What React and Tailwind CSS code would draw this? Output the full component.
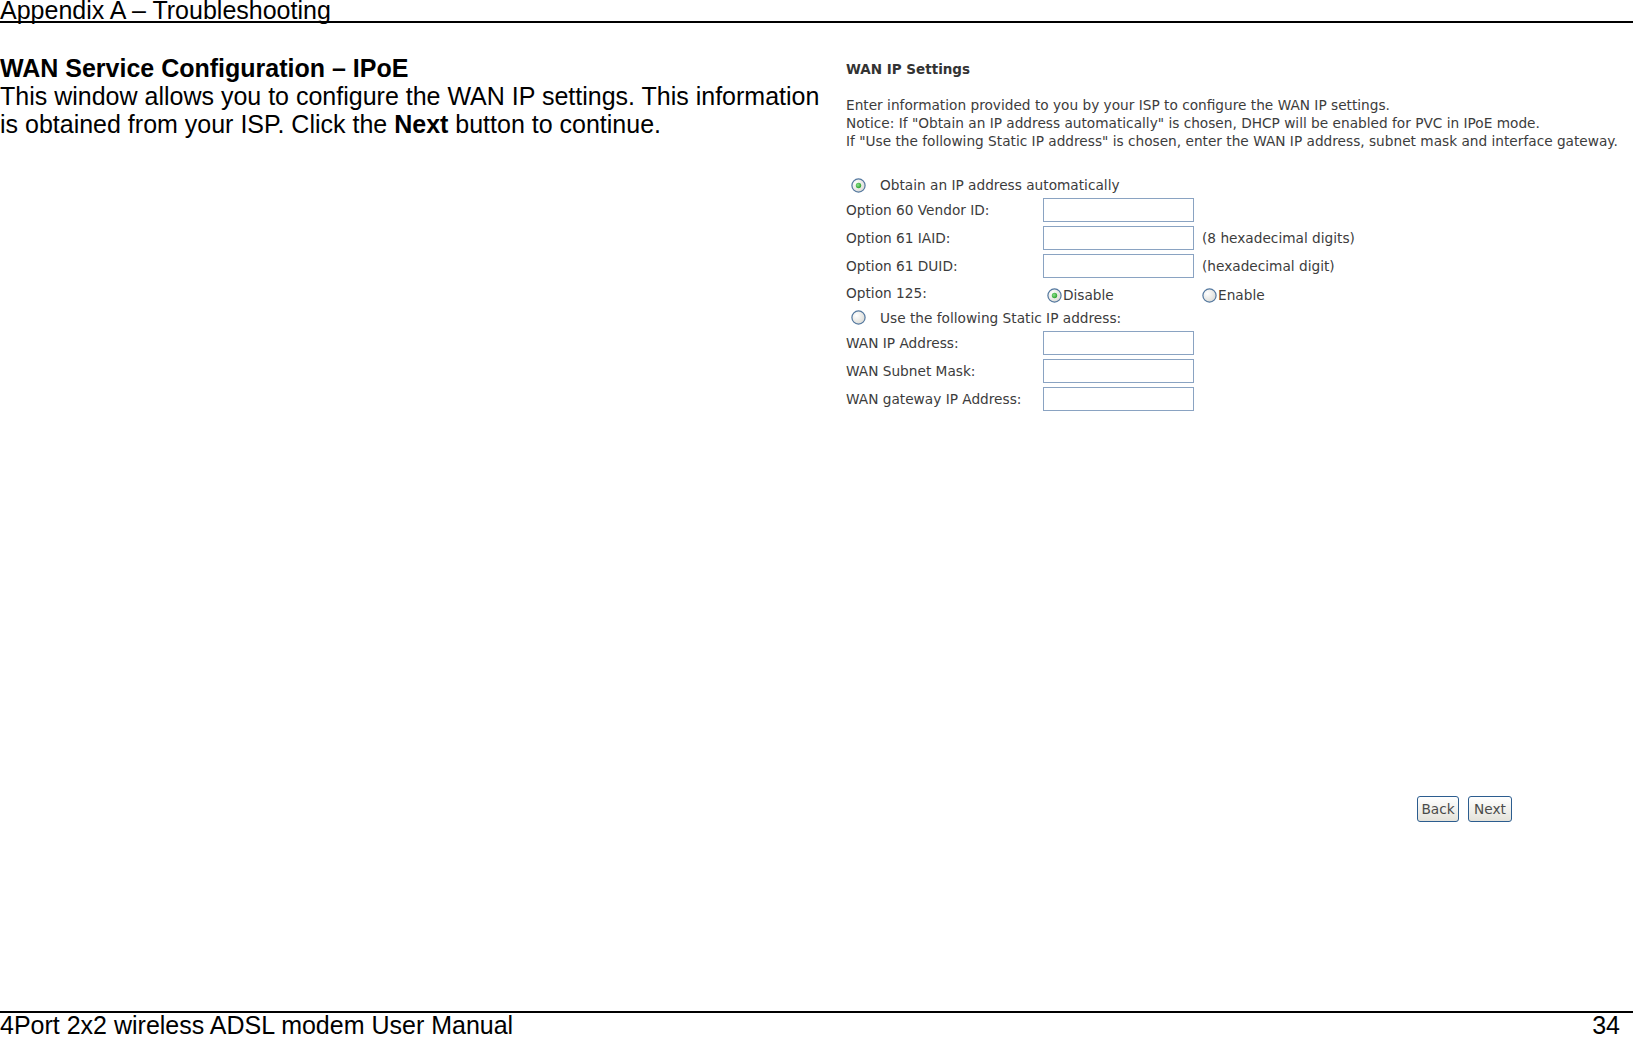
import React from "react";

const doc = "font-['Liberation_Sans',Arial,sans-serif] text-black";
const ui = "font-['DejaVu_Sans',Verdana,sans-serif] text-[13.7px] leading-[14px] text-[#3c3c3c]";

function Radio({ checked = false }) {
  return (
    <svg width="15" height="15" viewBox="0 0 15 15" className="shrink-0">
      <defs>
        <radialGradient id="radioFill" cx="0.35" cy="0.35" r="0.8">
          <stop offset="0%" stopColor="#ffffff" />
          <stop offset="100%" stopColor="#d6d6d0" />
        </radialGradient>
        <radialGradient id="radioDot" cx="0.4" cy="0.4" r="0.7">
          <stop offset="0%" stopColor="#8ee08e" />
          <stop offset="100%" stopColor="#1e9a1e" />
        </radialGradient>
      </defs>
      <circle cx="7.5" cy="7.5" r="6.6" fill="url(#radioFill)" stroke="#54789f" strokeWidth="1.2" />
      {checked && <circle cx="7.5" cy="7.5" r="2.7" fill="url(#radioDot)" />}
    </svg>
  );
}

function TextBox() {
  return <div className="h-[24px] w-[151px] shrink-0 border border-[#8aa3c2] bg-white" />;
}

function FieldRow({ label, hint }) {
  return (
    <div className="flex h-[28px] items-center">
      <div className="w-[197px] shrink-0">{label}</div>
      <TextBox />
      {hint && <div className="ml-[8px]">{hint}</div>}
    </div>
  );
}

function RadioRow({ checked, label, className = "" }) {
  return (
    <div className={`flex items-center pl-[5px] ${className}`}>
      <Radio checked={checked} />
      <span className="ml-[14px]">{label}</span>
    </div>
  );
}

function XpButton({ children, className = "" }) {
  return (
    <button
      className={`h-[26px] rounded-[3px] border border-[#2c5d8f] bg-linear-to-b from-white to-[#e4e2da] ${ui} text-[#4a4a4a] ${className}`}
    >
      {children}
    </button>
  );
}

export default function App() {
  return (
    <div className="flex h-[1038px] w-[1633px] flex-col overflow-hidden bg-white">
      {/* page header */}
      <div className={`${doc} h-[23px] shrink-0 border-b-2 border-black pb-[1px] text-[25px] leading-[20px]`}>
        Appendix A – Troubleshooting
      </div>

      <div className="flex min-h-0 flex-1">
        {/* manual text */}
        <div className={`${doc} w-[846px] shrink-0 pt-[31px] text-[25px] leading-[28px]`}>
          <div className="font-bold">WAN Service Configuration – IPoE</div>
          <div>
            This window allows you to configure the WAN IP settings. This information
            <br />
            is obtained from your ISP. Click the <span className="font-bold">Next</span> button to continue.
          </div>
        </div>

        {/* router screenshot */}
        <div className={`${ui} flex flex-1 flex-col pt-[39px]`}>
          <div className="text-[13.5px] font-bold text-[#333]">WAN IP Settings</div>

          <div className="mt-[20px] leading-[18px]">
            <div>Enter information provided to you by your ISP to configure the WAN IP settings.</div>
            <div>Notice: If "Obtain an IP address automatically" is chosen, DHCP will be enabled for PVC in IPoE mode.</div>
            <div>If "Use the following Static IP address" is chosen, enter the WAN IP address, subnet mask and interface gateway.</div>
          </div>

          <RadioRow checked label="Obtain an IP address automatically" className="mt-[24px] h-[22px]" />
          <FieldRow label="Option 60 Vendor ID:" />
          <FieldRow label="Option 61 IAID:" hint="(8 hexadecimal digits)" />
          <FieldRow label="Option 61 DUID:" hint="(hexadecimal digit)" />

          <div className="flex h-[26px] items-center">
            <div className="w-[197px] shrink-0">Option 125:</div>
            <div className="flex w-[159px] shrink-0 items-center pl-[4px] pt-[4px]">
              <Radio checked />
              <span className="ml-[1px]">Disable</span>
            </div>
            <div className="flex items-center pt-[4px]">
              <Radio />
              <span className="ml-[1px]">Enable</span>
            </div>
          </div>

          <RadioRow label="Use the following Static IP address:" className="h-[23px]" />
          <FieldRow label="WAN IP Address:" />
          <FieldRow label="WAN Subnet Mask:" />
          <FieldRow label="WAN gateway IP Address:" />

          <div className="mt-[383px] flex gap-[9px] pl-[571px]">
            <XpButton className="w-[42px]">Back</XpButton>
            <XpButton className="w-[44px]">Next</XpButton>
          </div>
        </div>
      </div>

      {/* page footer */}
      <div className={`${doc} flex h-[27px] shrink-0 justify-between border-t-2 border-black pr-[13px] text-[25px] leading-[25px]`}>
        <span>4Port 2x2 wireless ADSL modem User Manual</span>
        <span>34</span>
      </div>
    </div>
  );
}
